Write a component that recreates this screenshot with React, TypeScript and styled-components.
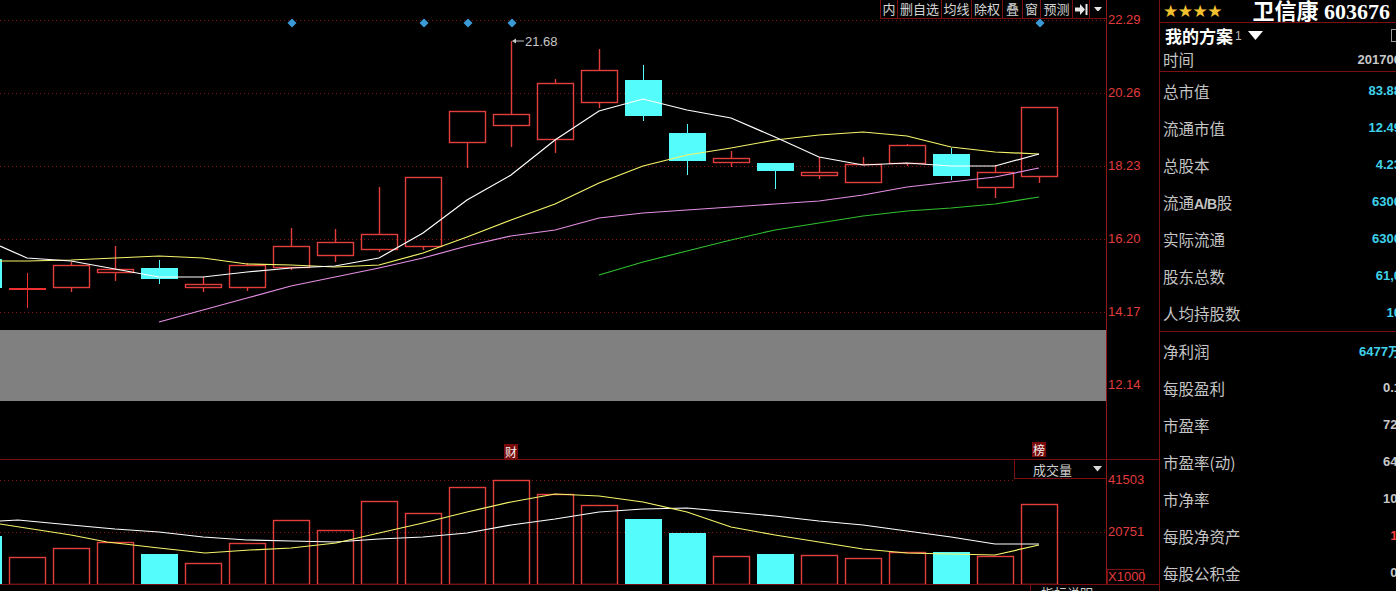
import React from "react";
import styled, { createGlobalStyle } from "styled-components";

const RED = "#e23e3e";
const CYAN = "#54fcfc";
const GRID = "#8a1212";
const LINE = "#7c1010";

const GlobalStyle = createGlobalStyle`
  html, body { margin: 0; padding: 0; background: #000; overflow: hidden; }
  body { font-family: "Noto Sans CJK SC", "Liberation Sans", sans-serif; }
`;

const Screen = styled.div`
  display: flex;
  width: 1396px;
  height: 591px;
  background: #000;
  overflow: hidden;
`;

const ChartColumn = styled.div`
  display: flex;
  flex-direction: column;
  width: 1159px;
  flex: none;
`;

const Panel = styled.div<{ $h: number }>`
  display: flex;
  height: ${(p) => p.$h}px;
  border-bottom: 1px solid ${LINE};
  flex: none;
`;

const Plot = styled.div`
  position: relative;
  width: 1106px;
  height: 100%;
  flex: none;
`;

const Axis = styled.div`
  position: relative;
  flex: 1;
  border-left: 1px solid #951818;
`;

const AxisLabel = styled.span`
  position: absolute;
  left: 1px;
  font-family: "Liberation Sans", Arial, sans-serif;
  font-size: 13px;
  line-height: 16px;
  color: #e03c3c;
`;

const UnitBox = styled.span`
  position: absolute;
  left: 0;
  bottom: 0;
  width: 35px;
  height: 14px;
  border: 1px solid ${LINE};
  border-bottom: none;
  font-family: "Liberation Sans", Arial, sans-serif;
  font-size: 13px;
  line-height: 14px;
  color: #e03c3c;
  text-align: center;
`;

const Svg = styled.svg`
  display: block;
`;

const Toolbar = styled.div`
  position: absolute;
  top: 0;
  right: 0;
  display: flex;
  height: 18px;
  border-bottom: 1px solid ${LINE};
  background: #000;
`;

const ToolButton = styled.div<{ $w: number }>`
  width: ${(p) => p.$w}px;
  height: 18px;
  box-sizing: border-box;
  border-left: 1px solid ${LINE};
  display: flex;
  align-items: center;
  justify-content: center;
  font-size: 13px;
  line-height: 18px;
  color: #d4d4d4;
  white-space: nowrap;
`;

const Badge = styled.span`
  position: absolute;
  width: 14px;
  height: 15px;
  background: #7a0a0a;
  color: #f0f0f0;
  font-size: 12px;
  line-height: 15px;
  text-align: center;
`;

const IndicatorSelect = styled.div`
  position: absolute;
  top: 0;
  right: 0;
  width: 92px;
  height: 19px;
  box-sizing: border-box;
  border-left: 1px solid ${LINE};
  border-bottom: 1px solid ${LINE};
  display: flex;
  align-items: center;
  justify-content: flex-end;
  gap: 21px;
  padding-right: 4px;
  font-size: 13px;
  color: #cfcfcf;
`;

const Footer = styled.div`
  flex: 1;
  display: flex;
  justify-content: flex-end;
  overflow: hidden;
  padding-right: 53px;
`;

const FooterTab = styled.div`
  width: 65px;
  border-left: 1px solid ${LINE};
  padding: 1px 0 0 10px;
  font-size: 13px;
  line-height: 14px;
  color: #cfcfcf;
  white-space: nowrap;
`;

const Side = styled.aside`
  width: 236px;
  flex: none;
  border-left: 1px solid ${LINE};
  display: flex;
  flex-direction: column;
  overflow: hidden;
`;

const TitleBar = styled.div`
  height: 23px;
  width: 236px;
  flex: none;
  border-bottom: 1px solid ${LINE};
  display: flex;
  align-items: center;
  justify-content: space-between;
  padding: 0 6px 0 3px;
  box-sizing: border-box;
`;

const Stars = styled.span`
  font-family: "DejaVu Sans", sans-serif;
  font-size: 17px;
  line-height: 20px;
  color: #f2c12e;
  letter-spacing: -0.5px;
`;

const StockTitle = styled.span`
  font-family: "Liberation Serif", "Noto Sans CJK SC", serif;
  font-weight: 700;
  font-size: 22px;
  line-height: 23px;
  color: #ffffff;
  white-space: nowrap;
`;

const SchemeRow = styled.div`
  height: 24px;
  width: 241px;
  flex: none;
  display: flex;
  align-items: center;
  padding-left: 5px;
  box-sizing: border-box;
`;

const SchemeName = styled.span`
  font-weight: 700;
  font-size: 17px;
  color: #ffffff;
`;

const SchemeIndex = styled.span`
  font-family: "Liberation Sans", Arial, sans-serif;
  font-size: 12px;
  color: #bdbdbd;
  margin: 2px 6px 0 2px;
`;

const Checkbox = styled.span`
  margin-left: auto;
  width: 8px;
  height: 11px;
  border: 1px solid #9a9a9a;
`;

const Group = styled.div<{ $border?: boolean }>`
  display: flex;
  flex-direction: column;
  flex: none;
  border-bottom: ${(p) => (p.$border ? `1px solid ${LINE}` : "none")};
`;

const InfoRow = styled.div<{ $h: number }>`
  width: 241px;
  height: ${(p) => p.$h}px;
  display: flex;
  align-items: center;
  justify-content: space-between;
  padding-left: 3px;
  box-sizing: border-box;
  white-space: nowrap;
`;

const Label = styled.span`
  font-size: 15.5px;
  color: #c4c4c4;
`;

const LatinBold = styled.span`
  font-family: "Liberation Sans", Arial, sans-serif;
  font-weight: 700;
  font-size: 14px;
  letter-spacing: -0.5px;
`;

const Value = styled.span<{ $tone: "cyan" | "gray" | "red" }>`
  font-family: "Liberation Sans", Arial, "Noto Sans CJK SC", sans-serif;
  font-weight: 700;
  font-size: 13px;
  color: ${(p) => (p.$tone === "cyan" ? "#3fd2ea" : p.$tone === "red" ? "#ff3c3c" : "#c8c8c8")};
`;

/* ---------------- chart data ---------------- */

const X0 = 27;
const STEP = 44;
const cx = (i: number) => X0 + STEP * i;

type Candle = { i: number; body: [number, number]; wick: [number, number]; up: boolean; doji?: boolean };

const candles: Candle[] = [
  { i: -1, body: [259, 288], wick: [259, 288], up: false },
  { i: 0, body: [289, 289], wick: [273, 308], up: true, doji: true },
  { i: 1, body: [265, 287], wick: [262, 292], up: true },
  { i: 2, body: [269, 272], wick: [246, 281], up: true },
  { i: 3, body: [268, 279], wick: [260, 284], up: false },
  { i: 4, body: [284, 287], wick: [277, 292], up: true },
  { i: 5, body: [265, 287], wick: [263, 291], up: true },
  { i: 6, body: [246, 267], wick: [228, 270], up: true },
  { i: 7, body: [242, 255], wick: [229, 262], up: true },
  { i: 8, body: [234, 249], wick: [187, 252], up: true },
  { i: 9, body: [177, 246], wick: [177, 250], up: true },
  { i: 10, body: [111, 142], wick: [111, 168], up: true },
  { i: 11, body: [114, 125], wick: [41, 147], up: true },
  { i: 12, body: [83, 139], wick: [79, 153], up: true },
  { i: 13, body: [70, 102], wick: [49, 108], up: true },
  { i: 14, body: [80, 116], wick: [65, 121], up: false },
  { i: 15, body: [133, 161], wick: [124, 175], up: false },
  { i: 16, body: [158, 162], wick: [151, 167], up: true },
  { i: 17, body: [163, 171], wick: [163, 189], up: false },
  { i: 18, body: [172, 175], wick: [157, 179], up: true },
  { i: 19, body: [164, 182], wick: [157, 182], up: true },
  { i: 20, body: [145, 163], wick: [144, 166], up: true },
  { i: 21, body: [154, 176], wick: [148, 180], up: false },
  { i: 22, body: [172, 187], wick: [165, 198], up: true },
  { i: 23, body: [107, 176], wick: [107, 183], up: true },
];

const volumes: { i: number; top: number; up: boolean }[] = [
  [536, false], [557, true], [548, true], [542, true], [554, false], [563, true], [543, true],
  [520, true], [530, true], [501, true], [513, true], [487, true], [480, true], [494, true],
  [505, true], [519, false], [533, false], [556, true], [554, false], [555, true], [558, true],
  [552, true], [552, false], [556, true], [504, true],
].map(([top, up], k) => ({ i: k - 1, top: (top as number) - 460, up: up as boolean }));

type Pt = [number, number];

const ma5: Pt[] = [[0, 246], [27, 258], [71, 261], [115, 269], [159, 277], [203, 277], [247, 272], [291, 268], [335, 266], [379, 258], [423, 233], [467, 200], [511, 175], [555, 140], [599, 111], [643, 99], [687, 110], [731, 118], [775, 137], [819, 157], [863, 165], [907, 163], [951, 166], [995, 166], [1039, 154]];
const ma10: Pt[] = [[0, 261], [27, 261], [71, 260], [115, 258], [159, 256], [203, 258], [247, 264], [291, 265], [335, 267], [379, 265], [423, 253], [467, 237], [511, 220], [555, 204], [599, 183], [643, 166], [687, 155], [731, 148], [775, 140], [819, 135], [863, 132], [907, 136], [951, 147], [995, 152], [1039, 154]];
const ma20: Pt[] = [[159, 322], [203, 310], [247, 298], [291, 286], [335, 277], [379, 268], [423, 258], [467, 246], [511, 236], [555, 230], [599, 218], [643, 213], [687, 210], [731, 207], [775, 204], [819, 201], [863, 195], [907, 187], [951, 182], [995, 177], [1039, 168]];
const ma30: Pt[] = [[599, 275], [643, 262], [687, 251], [731, 240], [775, 230], [819, 223], [863, 216], [907, 211], [951, 208], [995, 204], [1039, 197]];

const vma5: Pt[] = [[0, 521], [18, 520], [71, 525], [115, 529], [159, 532], [203, 537], [247, 540], [291, 541], [335, 542], [379, 539], [423, 537], [467, 533], [511, 525], [555, 519], [599, 512], [643, 509], [687, 508], [731, 512], [775, 516], [819, 521], [863, 525], [907, 531], [951, 537], [995, 544], [1039, 544]];
const vma10: Pt[] = [[0, 524], [71, 535], [107, 542], [159, 548], [205, 553], [250, 550], [291, 548], [336, 543], [379, 533], [423, 523], [467, 512], [511, 502], [555, 494], [599, 496], [643, 502], [687, 512], [731, 527], [775, 535], [819, 542], [863, 549], [907, 553], [951, 554], [995, 555], [1039, 545]];

const pts = (a: Pt[], dy = 0) => a.map(([x, y]) => `${x},${y - dy}`).join(" ");

const priceY = (p: number) => 20 + (22.29 - p) * (73 / 2.03);
const priceTicks = [22.29, 20.26, 18.23, 16.2, 14.17, 12.14];
const volTicks: [string, number][] = [["41503", 20], ["20751", 72]];

const diamonds = [6, 9, 10, 11, 23];

const toolItems: [string, number][] = [
  ["内", 17], ["删自选", 44], ["均线", 30], ["除权", 31], ["叠", 20], ["窗", 18], ["预测", 32],
];

const group1: [React.ReactNode, string, "cyan" | "gray" | "red"][] = [
  ["总市值", "83.88", "cyan"],
  ["流通市值", "12.49", "cyan"],
  ["总股本", "4.23", "cyan"],
  [<>流通<LatinBold>A/B</LatinBold>股</>, "6300", "cyan"],
  ["实际流通", "6300", "cyan"],
  ["股东总数", "61,0", "cyan"],
  ["人均持股数", "10", "cyan"],
];
const group2: [React.ReactNode, string, "cyan" | "gray" | "red"][] = [
  ["净利润", "6477万", "cyan"],
  ["每股盈利", "0.1", "gray"],
  ["市盈率", "72.", "gray"],
  ["市盈率(动)", "64.", "gray"],
  ["市净率", "10.", "gray"],
  ["每股净资产", "1.", "red"],
  ["每股公积金", "0.", "gray"],
];

/* ---------------- chart pieces ---------------- */

const CandleShape: React.FC<{ c: Candle }> = ({ c }) => {
  const x = cx(c.i);
  const [bt, bb] = c.body;
  const [wt, wb] = c.wick;
  if (c.doji) {
    return (
      <g>
        <line x1={x + 0.5} x2={x + 0.5} y1={wt} y2={wb} stroke="#f03030" strokeWidth={1} />
        <rect x={x - 18} y={bt - 1} width={37} height={2} fill="#f03030" />
      </g>
    );
  }
  if (!c.up) {
    return (
      <g>
        <line x1={x + 0.5} x2={x + 0.5} y1={wt} y2={wb} stroke={CYAN} strokeWidth={1} />
        <rect x={x - 18} y={bt} width={37} height={bb - bt} fill={CYAN} />
      </g>
    );
  }
  return (
    <g stroke={RED} strokeWidth={1.4} fill="none">
      {wt < bt && <line x1={x + 0.5} x2={x + 0.5} y1={wt} y2={bt} />}
      {wb > bb && <line x1={x + 0.5} x2={x + 0.5} y1={bb} y2={wb} />}
      <rect x={x - 17.5} y={bt + 0.5} width={36} height={Math.max(bb - bt, 2)} />
    </g>
  );
};

const PriceChart: React.FC = () => (
  <Svg width={1106} height={459} viewBox="0 0 1106 459">
    {priceTicks.map((p) => {
      const y = Math.round(priceY(p)) + 0.5;
      return <line key={p} x1={0} x2={1106} y1={y} y2={y} stroke={GRID} strokeDasharray="1 3" />;
    })}
    {candles.map((c) => (
      <CandleShape key={c.i} c={c} />
    ))}
    <polyline points={pts(ma30)} fill="none" stroke="#2fbf2f" strokeWidth={1.2} />
    <polyline points={pts(ma20)} fill="none" stroke="#e58fe5" strokeWidth={1.2} />
    <polyline points={pts(ma10)} fill="none" stroke="#f5f56a" strokeWidth={1.2} />
    <polyline points={pts(ma5)} fill="none" stroke="#ffffff" strokeWidth={1.2} />
    {diamonds.map((i) => {
      const x = cx(i) + 1;
      return <polygon key={i} points={`${x},18.5 ${x + 4.5},23 ${x},27.5 ${x - 4.5},23`} fill="#3b9ad6" />;
    })}
    <g stroke="#c8c8c8" fill="#c8c8c8">
      <line x1={514} x2={524} y1={41} y2={41} strokeWidth={1} />
      <polygon points="512,41 516,38.5 516,43.5" stroke="none" />
    </g>
    <text x={525} y={45.5} fill="#c8c8c8" fontFamily="Liberation Sans, Arial, sans-serif" fontSize={13}>
      21.68
    </text>
    <rect x={0} y={330} width={1106} height={71} fill="#808080" />
  </Svg>
);

const VolumeChart: React.FC = () => (
  <Svg width={1106} height={124} viewBox="0 0 1106 124">
    <line x1={0} x2={1014} y1={20.5} y2={20.5} stroke={GRID} strokeDasharray="1 3" />
    <line x1={0} x2={1106} y1={72.5} y2={72.5} stroke={GRID} strokeDasharray="1 3" />
    {volumes.map((v) => {
      const x = cx(v.i);
      return v.up ? (
        <rect key={v.i} x={x - 17.5} y={v.top + 0.5} width={36} height={124 - v.top} fill="none" stroke={RED} strokeWidth={1.4} />
      ) : (
        <rect key={v.i} x={x - 18} y={v.top} width={37} height={124 - v.top} fill={CYAN} />
      );
    })}
    <polyline points={pts(vma5, 460)} fill="none" stroke="#ffffff" strokeWidth={1.2} />
    <polyline points={pts(vma10, 460)} fill="none" stroke="#f5f56a" strokeWidth={1.2} />
  </Svg>
);

const ExitIcon: React.FC = () => (
  <svg width={13} height={11} viewBox="0 0 13 11">
    <polygon points="0,3.5 5,3.5 5,0 10,5.5 5,11 5,7.5 0,7.5" fill="#e6e6e6" />
    <rect x={10.5} y={0} width={2} height={11} fill="#e6e6e6" />
  </svg>
);

const Caret: React.FC<{ size: number; color: string }> = ({ size, color }) => (
  <svg width={size} height={size * 0.6} viewBox="0 0 10 6">
    <polygon points="0,0 10,0 5,6" fill={color} />
  </svg>
);

export default function App() {
  return (
    <>
      <GlobalStyle />
      <Screen>
        <ChartColumn>
          <Panel $h={459}>
            <Plot>
              <PriceChart />
              <Toolbar>
                {toolItems.map(([t, w]) => (
                  <ToolButton key={t} $w={w}>
                    {t}
                  </ToolButton>
                ))}
                <ToolButton $w={17}>
                  <ExitIcon />
                </ToolButton>
                <ToolButton $w={17}>
                  <Caret size={8} color="#e6e6e6" />
                </ToolButton>
              </Toolbar>
              <Badge style={{ left: cx(11) - 7, top: 444 }}>财</Badge>
              <Badge style={{ left: cx(23) - 7, top: 442 }}>榜</Badge>
            </Plot>
            <Axis>
              {priceTicks.map((p) => (
                <AxisLabel key={p} style={{ top: Math.round(priceY(p)) - 8 }}>
                  {p.toFixed(2)}
                </AxisLabel>
              ))}
            </Axis>
          </Panel>
          <Panel $h={124}>
            <Plot>
              <VolumeChart />
              <IndicatorSelect>
                <span>成交量</span>
                <Caret size={9} color="#d8d8d8" />
              </IndicatorSelect>
            </Plot>
            <Axis>
              {volTicks.map(([t, y]) => (
                <AxisLabel key={t} style={{ top: y - 8 }}>
                  {t}
                </AxisLabel>
              ))}
              <UnitBox>X1000</UnitBox>
            </Axis>
          </Panel>
          <Footer>
            <FooterTab>指标说明</FooterTab>
          </Footer>
        </ChartColumn>
        <Side>
          <TitleBar>
            <Stars>★★★★</Stars>
            <StockTitle>卫信康 603676</StockTitle>
          </TitleBar>
          <SchemeRow>
            <SchemeName>我的方案</SchemeName>
            <SchemeIndex>1</SchemeIndex>
            <Caret size={15} color="#ffffff" />
            <Checkbox />
          </SchemeRow>
          <Group $border>
            <InfoRow $h={24}>
              <Label>时间</Label>
              <Value $tone="gray">201706</Value>
            </InfoRow>
          </Group>
          <Group $border>
            {group1.map(([l, v, t], k) => (
              <InfoRow key={k} $h={37}>
                <Label>{l}</Label>
                <Value $tone={t}>{v}</Value>
              </InfoRow>
            ))}
          </Group>
          <Group>
            {group2.map(([l, v, t], k) => (
              <InfoRow key={k} $h={37}>
                <Label>{l}</Label>
                <Value $tone={t}>{v}</Value>
              </InfoRow>
            ))}
          </Group>
        </Side>
      </Screen>
    </>
  );
}
